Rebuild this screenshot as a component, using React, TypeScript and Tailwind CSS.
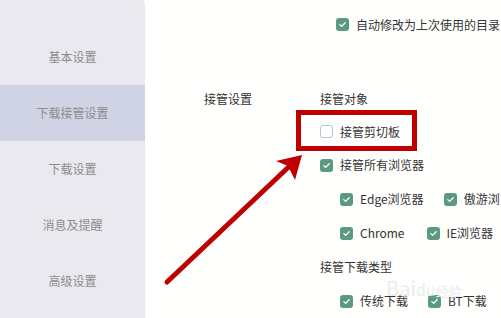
import React from "react";

// Small checkbox used in the settings panel
const Box: React.FC<{ checked?: boolean }> = ({ checked }) =>
  checked ? (
    <span className="flex h-[13px] w-[13px] shrink-0 items-center justify-center rounded-[3px] bg-[#5b9a7f]">
      <svg width="9" height="9" viewBox="0 0 9 9" fill="none">
        <path d="M1.8 4.6 L3.7 6.4 L7.2 2.8" stroke="#ffffff" strokeWidth="1.3" strokeLinecap="round" strokeLinejoin="round" />
      </svg>
    </span>
  ) : (
    <span className="h-[13px] w-[13px] shrink-0 rounded-[3px] border border-[#a6d3bf] bg-white" />
  );

const Option: React.FC<{ label: string; checked?: boolean }> = ({ label, checked }) => (
  <div className="flex items-center gap-[7px] whitespace-nowrap">
    <Box checked={checked} />
    <span>{label}</span>
  </div>
);

const menu = ["基本设置", "下载接管设置", "下载设置", "消息及提醒", "高级设置"];

export default function App() {
  return (
    <div
      className="relative flex h-[318px] w-[501px] overflow-hidden bg-[#fffffd] text-[12px] text-[#333333]"
      style={{ fontFamily: '"Noto Sans CJK SC", "Noto Sans", sans-serif' }}
    >
      {/* sidebar */}
      <div className="w-[145px] shrink-0 rounded-tr-[4px] bg-[#eae9f0] pt-[29px]">
        {menu.map((m, i) => (
          <div
            key={m}
            className={`flex h-[56px] items-center justify-center text-[#8c8c8c] ${i === 1 ? "bg-[#d0d3e4]" : ""}`}
          >
            {m}
          </div>
        ))}
      </div>

      {/* main panel */}
      <div className="flex flex-1 flex-col">
        <div className="ml-[192px] h-[1px] bg-[#a8d0c0]" />
        <div className="ml-[191px] mt-[18px] flex h-[13px] items-center">
          <Option label="自动修改为上次使用的目录" checked />
        </div>

        <div className="mt-[51px] flex">
          <div className="flex h-[33px] w-[175px] items-center pl-[59px]">接管设置</div>
          <div className="flex flex-col">
            <div className="flex h-[33px] items-center">接管对象</div>
            <div className="flex h-[33px] items-center">
              <Option label="接管剪切板" />
            </div>
            <div className="flex h-[34px] items-center">
              <Option label="接管所有浏览器" checked />
            </div>
            <div className="flex h-[34px] items-center gap-[20px] pl-[20px]">
              <Option label="Edge浏览器" checked />
              <Option label="傲游浏览器" checked />
            </div>
            <div className="flex h-[34px] items-center gap-[22px] pl-[20px]">
              <Option label="Chrome" checked />
              <Option label="IE浏览器" checked />
            </div>
            <div className="flex h-[34px] items-center">接管下载类型</div>
            <div className="flex h-[34px] items-center gap-[20px] pl-[20px]">
              <Option label="传统下载" checked />
              <Option label="BT下载" checked />
            </div>
          </div>
        </div>
      </div>

      {/* annotation: red box */}
      <div className="pointer-events-none absolute left-[296px] top-[110px] h-[41px] w-[121px] border-[5px] border-[#bd0000]" />

      {/* annotation: arrow */}
      <svg className="pointer-events-none absolute left-0 top-0" width="501" height="318" viewBox="0 0 501 318">
        <line x1="167" y1="282" x2="296" y2="160" stroke="#bd0000" strokeWidth="5" strokeLinecap="round" />
        <path d="M302 155 L276 161 L288 166 L295 180 Z" fill="#bd0000" />
      </svg>

      {/* watermark */}
      <div className="pointer-events-none absolute left-[386px] top-[278px] text-[20px] leading-none text-[#ececec]">
        Bai<span className="text-[16px]">du</span>
        <span className="text-[13px]">经验</span>
      </div>
    </div>
  );
}
